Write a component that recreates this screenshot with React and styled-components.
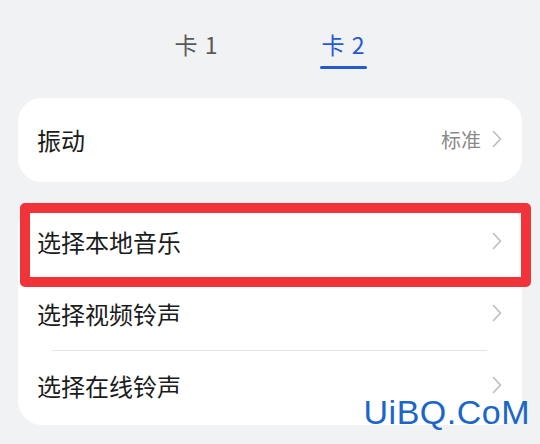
import styled, { createGlobalStyle } from "styled-components";

const Global = createGlobalStyle`
  body {
    margin: 0;
    background: #f1f2f4;
    font-family: "Noto Sans CJK SC", "Noto Sans", sans-serif;
  }
`;

const Page = styled.div`
  position: relative;
  width: 540px;
  height: 444px;
  padding: 0 18px;
  box-sizing: border-box;
  overflow: hidden;
`;

const Tabs = styled.div`
  display: flex;
  justify-content: center;
  gap: 100px;
  height: 98px;
  padding-top: 28px;
  box-sizing: border-box;
`;

const Tab = styled.div`
  display: flex;
  flex-direction: column;
  align-items: center;
  font-size: 23px;
  line-height: 32px;
  color: ${(p) => (p.$active ? "#2459d2" : "#5a5a5a")};
  letter-spacing: 1px;
`;

const Underline = styled.div`
  width: 47px;
  height: 3px;
  border-radius: 2px;
  margin-top: 6px;
  background: ${(p) => (p.$active ? "#2459d2" : "transparent")};
`;

const Card = styled.div`
  background: #fff;
  border-radius: 24px;
  padding: ${(p) => p.$pad || "0"};
  margin-bottom: ${(p) => p.$mb || "0"};
`;

const Row = styled.div`
  position: relative;
  display: flex;
  align-items: center;
  height: ${(p) => p.$h || 72}px;
  padding: 0 20px 2px 19px;
  box-sizing: border-box;
`;

const Divider = styled.div`
  position: absolute;
  top: 0;
  left: 34px;
  right: 35px;
  height: 1px;
  background: #e4e4e4;
`;

const Label = styled.div`
  flex: 1;
  font-size: 24px;
  color: #1b1b1b;
`;

const Value = styled.div`
  font-size: 20px;
  color: #8a8a8a;
  margin-right: 11px;
`;

const Highlight = styled.div`
  position: absolute;
  top: -3px;
  left: 2px;
  right: -9px;
  bottom: -9px;
  border: 10px solid #f0343a;
  border-radius: 5px;
  pointer-events: none;
`;

const Watermark = styled.div`
  position: absolute;
  right: 10px;
  bottom: 12px;
  font-family: "Liberation Sans", "DejaVu Sans", sans-serif;
  font-size: 34px;
  color: #1b67c9;
  letter-spacing: 0.5px;
`;

const Chevron = () => (
  <svg width="10" height="18" viewBox="0 0 10 18">
    <path d="M1.5 1.5 L8.5 9 L1.5 16.5" fill="none" stroke="#bdbdbd" strokeWidth="1.6" strokeLinecap="round" strokeLinejoin="round" />
  </svg>
);

export default function App() {
  return (
    <Page>
      <Global />
      <Tabs>
        <Tab>
          卡 1
          <Underline />
        </Tab>
        <Tab $active>
          卡 2
          <Underline $active />
        </Tab>
      </Tabs>
      <Card $mb="22px">
        <Row $h={84}>
          <Label>振动</Label>
          <Value>标准</Value>
          <Chevron />
        </Row>
      </Card>
      <Card $pad="2px 0 3px">
        <Row>
          <Label>选择本地音乐</Label>
          <Chevron />
          <Highlight />
        </Row>
        <Row>
          <Label>选择视频铃声</Label>
          <Chevron />
        </Row>
        <Row>
          <Divider />
          <Label>选择在线铃声</Label>
          <Chevron />
        </Row>
      </Card>
      <Watermark>UiBQ.CoM</Watermark>
    </Page>
  );
}
